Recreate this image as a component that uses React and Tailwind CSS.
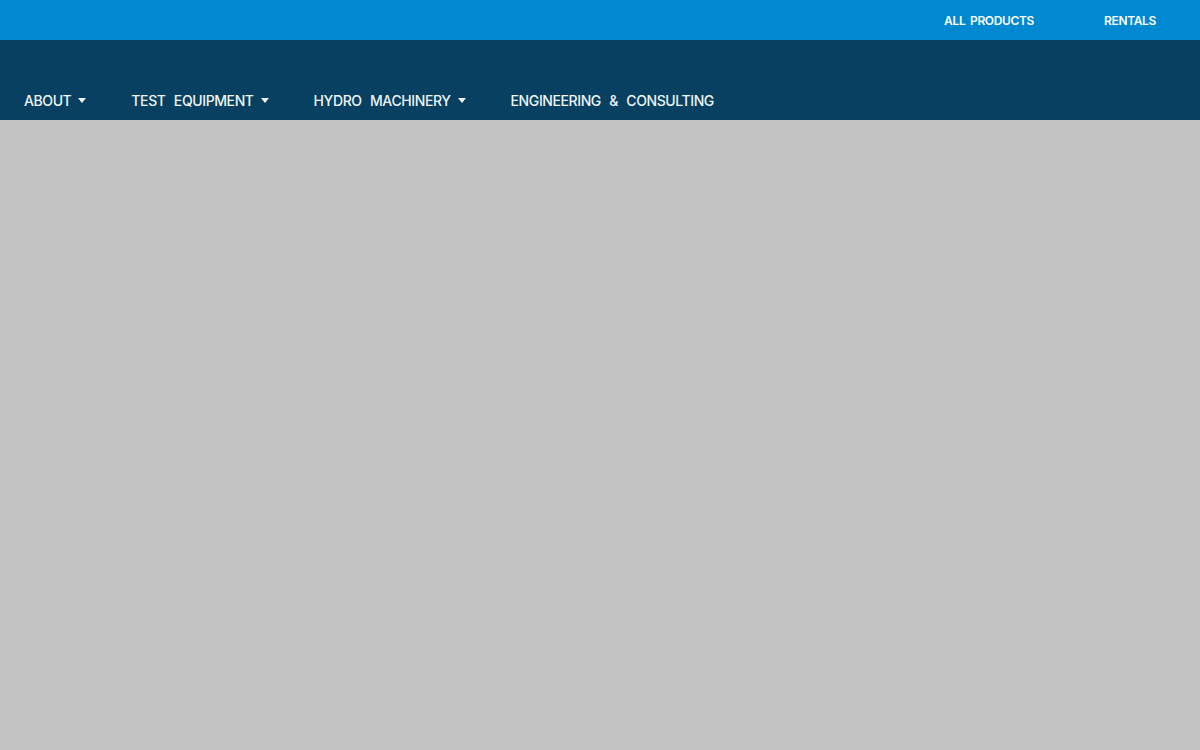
export default function App() {
  const Caret = () => (
    <svg width="8" height="5" viewBox="0 0 8 5" className="ml-[7px]">
      <path d="M0 0h8L4 5z" fill="currentColor" />
    </svg>
  )

  const items = [
    { label: "ABOUT", caret: true },
    { label: "TEST EQUIPMENT", caret: true },
    { label: "HYDRO MACHINERY", caret: true },
    { label: "ENGINEERING & CONSULTING", caret: false },
  ]

  return (
    <div className="min-h-[750px] bg-[#c4c4c4] font-['Inter',sans-serif]">
      <div className="h-10 bg-[#0088d1] flex items-center justify-end pr-[44px] pt-[2px] gap-[70px] text-white text-[12px] font-semibold tracking-[-0.35px] [word-spacing:2px]">
        <a>ALL PRODUCTS</a>
        <a>RENTALS</a>
      </div>
      <div className="h-20 bg-[#074060] flex items-end pb-[9px] pl-6">
        <nav className="flex items-center gap-[45px] text-[#f0f4f7] text-[14px] font-medium tracking-[-0.4px] [word-spacing:5px]">
          {items.map(it => (
            <span key={it.label} className="flex items-center">
              {it.label}
              {it.caret && <Caret />}
            </span>
          ))}
        </nav>
      </div>
    </div>
  )
}
